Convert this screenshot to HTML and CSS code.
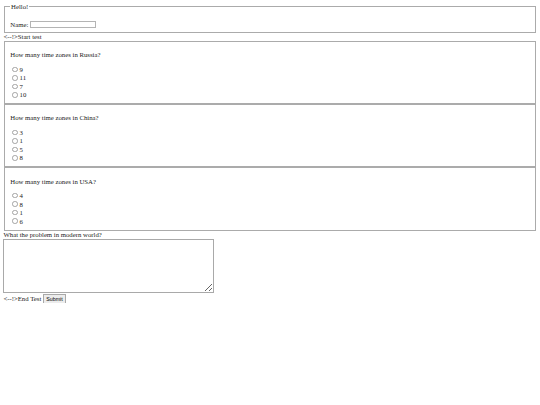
FILE: index.html
```html
<!DOCTYPE html>
<html>
<head>
<meta charset="utf-8">
<title>Test</title>
<link rel="stylesheet" href="styles.css">
</head>
<body>
<form class="test-form">
  <fieldset class="box intro">
    <legend class="legend">Hello!</legend>
    <div class="name-row">Name: <input type="text" class="name-input"></div>
  </fieldset>
  <div class="marker">&lt;--!&gt;Start test</div>
  <fieldset class="box question">
    <p class="q">How many time zones in Russia?</p>
    <label class="option"><input type="radio" class="radio" name="q1"> 9</label>
    <label class="option"><input type="radio" class="radio" name="q1"> 11</label>
    <label class="option"><input type="radio" class="radio" name="q1"> 7</label>
    <label class="option"><input type="radio" class="radio" name="q1"> 10</label>
  </fieldset>
  <fieldset class="box question">
    <p class="q">How many time zones in China?</p>
    <label class="option"><input type="radio" class="radio" name="q2"> 3</label>
    <label class="option"><input type="radio" class="radio" name="q2"> 1</label>
    <label class="option"><input type="radio" class="radio" name="q2"> 5</label>
    <label class="option"><input type="radio" class="radio" name="q2"> 8</label>
  </fieldset>
  <fieldset class="box question">
    <p class="q">How many time zones in USA?</p>
    <label class="option"><input type="radio" class="radio" name="q3"> 4</label>
    <label class="option"><input type="radio" class="radio" name="q3"> 8</label>
    <label class="option"><input type="radio" class="radio" name="q3"> 1</label>
    <label class="option"><input type="radio" class="radio" name="q3"> 6</label>
  </fieldset>
  <div class="marker prompt">What the problem in modern world?</div>
  <textarea class="answer"></textarea>
  <div class="marker end">&lt;--!&gt;End Test <input type="submit" class="submit" value="Submit"></div>
</form>
</body>
</html>
```

FILE: styles.css
```css
body {
  margin: 3.4px;
  font-family: "Liberation Serif", "Times New Roman", serif;
  font-size: 6.75px;
  color: #222;
  background: #fff;
}
.box {
  margin: 0 0.84px;
  padding: 0.35em 0.75em 0.625em;
  border: 1px solid #ababab;
  min-width: 0;
}
.legend {
  padding: 0 0.84px;
}
.name-row {
  margin-top: 7px;
  height: 8.5px;
  display: flex;
  align-items: center;
  gap: 1.7px;
}
.name-input {
  box-sizing: border-box;
  width: 66px;
  height: 7px;
  margin: 0;
  padding: 0 1px;
  border: 1px solid #b4b4b4;
  font-size: 5.6px;
  background: #fff;
}
.marker {
  line-height: 7.8px;
}
.prompt {
  margin-top: 0.5px;
}
.q {
  margin: 1em 0;
}
.option {
  display: flex;
  align-items: center;
  height: 8.5px;
  gap: 1.7px;
}
.radio {
  box-sizing: border-box;
  appearance: none;
  width: 5.5px;
  height: 5.5px;
  margin: 0 0 0 2.1px;
  border: 0.6px solid #a3a3a3;
  border-radius: 50%;
  background: #fff;
}
.answer {
  display: block;
  box-sizing: border-box;
  width: 211px;
  height: 54px;
  margin: 0.5px 0 0;
  padding: 1px;
  border: 1px solid #a9a9a9;
  border-radius: 0;
  resize: both;
  font-size: 5.6px;
}
.end {
  margin-top: 1px;
  display: flex;
  align-items: center;
  gap: 1.5px;
  height: 9px;
}
.submit {
  margin: 0;
  padding: 0.8px 2.4px;
  font-family: "Liberation Sans", Arial, sans-serif;
  font-size: 5.3px;
  line-height: 6px;
  background: #ececec;
  border: 1px solid #a9a9a9;
  border-radius: 0;
  color: #000;
}
```
